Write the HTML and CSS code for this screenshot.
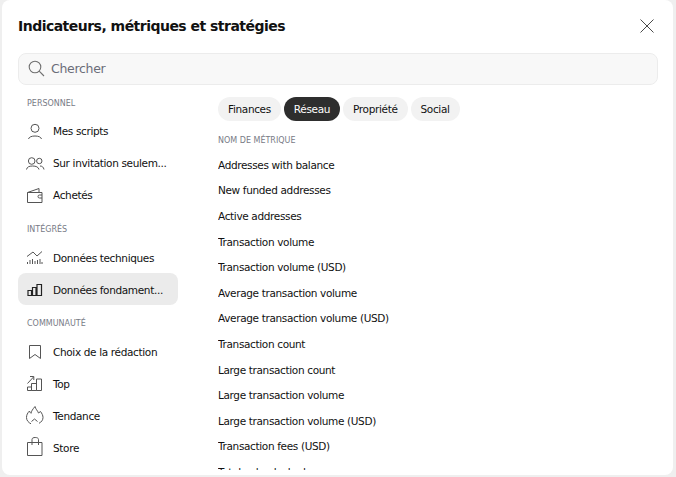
FILE: index.html
```html
<!DOCTYPE html>
<html lang="fr">
<head>
<meta charset="utf-8">
<title>Indicateurs</title>
<link rel="stylesheet" href="styles.css">
</head>
<body>
<div class="modal">
  <header class="head">
    <h1 class="title">Indicateurs, métriques et stratégies</h1>
    <svg class="close" width="14" height="14" viewBox="0 0 14 14"><path d="M.5.5l13 13M13.500.5l-13 13" stroke="#4a4a4a" fill="none"/></svg>
  </header>
  <div class="search">
    <svg class="search-icon" width="18" height="18" viewBox="0 0 18 18"><circle cx="7" cy="7" r="5.800" stroke="#707070" stroke-width="1.100" fill="none"/><path d="M11.200 11.200L16 16" stroke="#707070" stroke-width="1.100" fill="none"/></svg>
    <span class="search-text">Chercher</span>
  </div>
  <div class="body">
    <nav class="side">
      <div class="label label-first">PERSONNEL</div>
      <a class="item"><svg class="ico" width="18" height="18" viewBox="0 0 18 18"><circle cx="9" cy="6.300" r="4"/><path d="M2.500 17C3 15 5.500 14 9 14S15 15 15.500 17"/></svg><span>Mes scripts</span></a>
      <a class="item"><svg class="ico" width="18" height="18" viewBox="0 0 18 18"><circle cx="5.700" cy="7" r="3.300"/><circle cx="13.300" cy="7" r="2.700"/><path d="M.5 15.500C1 13 3 12 6.500 12S12.500 13 13 15.500M14 12C16 12 17.500 13 18 15.500"/></svg><span>Sur invitation seulem...</span></a>
      <a class="item"><svg class="ico" width="18" height="18" viewBox="0 0 18 18"><path d="M1.500 6.500V16.500H16V6.500H1.500L13 2.500V6.500"/><path d="M16 9H13.500a1.500 1.500 0 0 0 0 3H16"/></svg><span>Achetés</span></a>
      <div class="label label-next">INTÉGRÉS</div>
      <a class="item"><svg class="ico" width="18" height="18" viewBox="0 0 18 18"><path d="M1 7.500L7 3l4 4 5-4.500"/><path d="M1.500 15v-2M4 15v-4M6.500 15v-5M9 15v-3M11.500 15v-4M14 15v-5M16 15v-2"/></svg><span>Données techniques</span></a>
      <a class="item active"><svg class="ico ico-dark" width="18" height="18" viewBox="0 0 18 18"><path d="M2 14.500V9.500H5.500V14.500ZM6.500 14.500V6.500H10V14.500ZM11 14.500V3.500H15.500V14.500Z"/></svg><span>Données fondament...</span></a>
      <div class="label label-last">COMMUNAUTÉ</div>
      <a class="item"><svg class="ico" width="18" height="18" viewBox="0 0 18 18"><path d="M3.500 2.500H14.500V15.500L9 11.500 3.500 15.500Z"/></svg><span>Choix de la rédaction</span></a>
      <a class="item"><svg class="ico" width="18" height="18" viewBox="0 0 18 18"><path d="M1.500 15.500V12H5.500V15.500ZM5.500 15.500V8.500H10.500V15.500ZM10.500 15.500V4H15.500V15.500ZM1.500 8.500L7.500 2M4 1.500H7.800V5"/></svg><span>Top</span></a>
      <a class="item"><svg class="ico" width="18" height="18" viewBox="0 0 18 18"><path d="M5 16.800C2.500 15.500.5 13.500.5 10.500c0-2.500 1-4.500 3-6.500.2 1 .7 1.700 1.500 2.300C5.500 4 6.500 2.500 9-.5c.5 2.500 2.500 4 3.500 6.500l2-1.500c1.500 2 2.500 4 2.500 6 0 2.500-1.500 4.500-4 5.800M5.500 14.500l3-2.500 3 2.500"/></svg><span>Tendance</span></a>
      <a class="item"><svg class="ico" width="18" height="18" viewBox="0 0 18 18"><path d="M1.500 3.500H16V16.500H1.500ZM6 6V.5C6-1 7.500-1.500 9.200-1.500S12.500-1 12.500.5V6"/></svg><span>Store</span></a>
    </nav>
    <main class="main">
      <div class="tabs">
        <span class="tab">Finances</span>
        <span class="tab tab-on">Réseau</span>
        <span class="tab">Propriété</span>
        <span class="tab">Social</span>
      </div>
      <div class="label col-label">NOM DE MÉTRIQUE</div>
      <ul class="list">
        <li>Addresses with balance</li>
        <li>New funded addresses</li>
        <li>Active addresses</li>
        <li>Transaction volume</li>
        <li>Transaction volume (USD)</li>
        <li>Average transaction volume</li>
        <li>Average transaction volume (USD)</li>
        <li>Transaction count</li>
        <li>Large transaction count</li>
        <li>Large transaction volume</li>
        <li>Large transaction volume (USD)</li>
        <li>Transaction fees (USD)</li>
        <li>Total value locked</li>
      </ul>
    </main>
  </div>
</div>
</body>
</html>
```
FILE: styles.css
```css
* { box-sizing: border-box; }
html, body { margin: 0; height: 100%; overflow: hidden; }
body { background: #efefef; font-family: "DejaVu Sans", sans-serif; color: #111; }
.modal { width: 671px; height: 475px; margin-left: 2px; background: #fff; border-radius: 8px; overflow: hidden; display: flex; flex-direction: column; padding: 0 16px 5px; }
.head { height: 53px; flex: none; display: flex; align-items: center; justify-content: space-between; padding: 0 3px 1px 0; }
.title { margin: 0; font-size: 14px; font-weight: 700; line-height: 20px; letter-spacing: -.52px; }
.search { height: 32px; width: 640px; flex: none; background: #f8f8f8; border: 1px solid #ececec; border-radius: 8px; display: flex; align-items: center; gap: 5px; padding-left: 9px; }
.search-text { font-size: 12.5px; letter-spacing: -.3px; color: #6a6d78; padding-bottom: 2px; }
.body { display: flex; flex: 1; min-height: 0; }
.side { width: 160px; flex: none; display: flex; flex-direction: column; }
.label { font-size: 8px; color: #787b86; line-height: 12px; letter-spacing: 0; padding-left: 9px; margin-bottom: 5px; }
.label-first { margin-top: 12.7px; margin-bottom: 4.4px; }
.label-next { margin-top: 14px; }
.label-last { margin-top: 13px; margin-bottom: 4.6px; }
.item { height: 32px; flex: none; display: flex; align-items: center; gap: 9px; padding: 2px 0 0 8px; font-size: 10.5px; letter-spacing: -.35px; border-radius: 8px; }
.active { background: #ebebeb; }
.ico { fill: none; stroke: #555; flex: none; overflow: visible; }
.ico-dark { stroke: #222; stroke-width: 1.200; }
.main { margin-left: 40px; flex: 1; min-width: 0; overflow: hidden; }
.tabs { display: flex; gap: 3px; margin-top: 12px; }
.tab { height: 24px; line-height: 24px; padding: 0 10px; background: #f2f2f2; border-radius: 12px; font-size: 10.5px; letter-spacing: -.35px; }
.tab-on { background: #2e2e2e; color: #fff; }
.col-label { padding-left: 0; margin-top: 13.5px; margin-bottom: 0; }
.list { list-style: none; margin: 6.3px 0 0; padding: 0; }
.list li { height: 25.6px; line-height: 25.6px; font-size: 10.5px; letter-spacing: -.35px; white-space: nowrap; }
```
